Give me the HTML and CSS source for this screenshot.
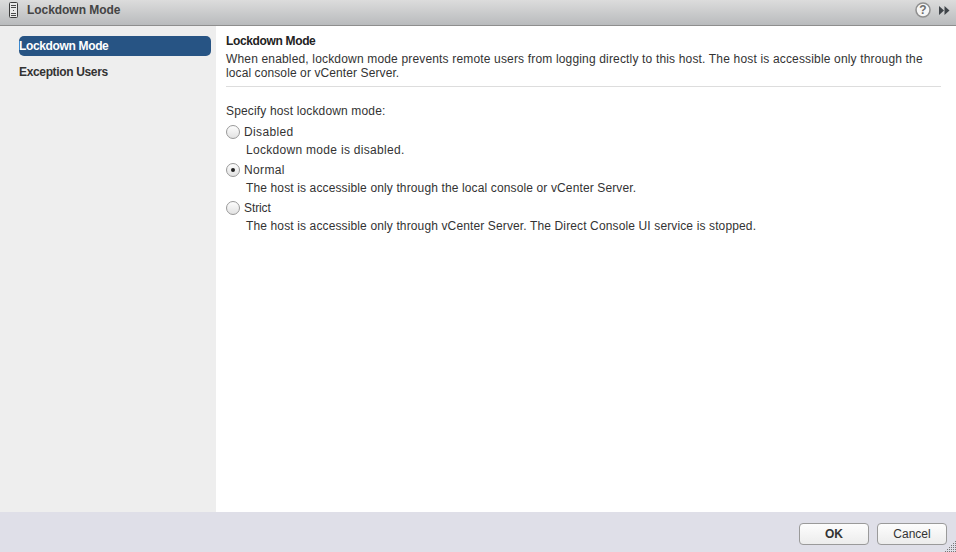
FILE: index.html
```html
<!DOCTYPE html>
<html lang="en">
<head>
<meta charset="utf-8">
<title>Lockdown Mode</title>
<link rel="stylesheet" href="styles.css">
</head>
<body>
<div class="dialog">
  <header class="titlebar">
    <svg class="host-icon" width="9" height="16" viewBox="0 0 9 16">
      <rect x="0.5" y="0.5" width="8" height="15" rx="1" fill="#e9e9e9" stroke="#3c3c3c"/>
      <path d="M2 3.5h5M2 5.5h5M2 11.5h5M2 13.5h5" stroke="#4a4a4a"/>
      <rect x="4" y="8" width="1" height="1" fill="#555"/>
    </svg>
    <span class="title">Lockdown Mode</span>
    <span class="spacer"></span>
    <svg class="help" width="16" height="16" viewBox="0 0 16 16">
      <circle cx="8" cy="8" r="7" fill="#f6f6f6" stroke="#8f8f8f" stroke-width="1.5"/>
      <text x="8" y="12" text-anchor="middle" class="help-mark">?</text>
    </svg>
    <svg class="expand" width="11" height="9" viewBox="0 0 11 9">
      <path d="M0 0L5 4.5L0 9ZM5.5 0L10.5 4.5L5.5 9Z" fill="#3f4449"/>
    </svg>
  </header>
  <div class="main">
    <nav class="sidebar">
      <a class="nav-item active">Lockdown Mode</a>
      <a class="nav-item">Exception Users</a>
    </nav>
    <section class="content">
      <div class="intro">
        <h2 class="heading">Lockdown Mode</h2>
        <p class="desc">When enabled, lockdown mode prevents remote users from logging directly to this host. The host is accessible only through the <span class="desc-end">local console or vCenter Server.</span></p>
      </div>
      <p class="prompt">Specify host lockdown mode:</p>
      <div class="option">
        <div class="radio-line"><span class="radio"></span><span>Disabled</span></div>
        <div class="hint hint-wide">Lockdown mode is disabled.</div>
      </div>
      <div class="option">
        <div class="radio-line"><span class="radio checked"></span><span>Normal</span></div>
        <div class="hint">The host is accessible only through the local console or vCenter Server.</div>
      </div>
      <div class="option">
        <div class="radio-line"><span class="radio"></span><span class="label-tight">Strict</span></div>
        <div class="hint">The host is accessible only through vCenter Server. The Direct Console UI service is stopped.</div>
      </div>
    </section>
  </div>
  <footer class="footer">
    <button class="btn ok">OK</button>
    <button class="btn">Cancel</button>
    <svg class="grip" width="11" height="11" viewBox="0 0 11 11">
      <path d="M10 0h1v1h-1zM8 2h1v1H8zM10 2h1v1h-1zM6 4h1v1H6zM8 4h1v1H8zM10 4h1v1h-1zM4 6h1v1H4zM6 6h1v1H6zM8 6h1v1H8zM10 6h1v1h-1zM2 8h1v1H2zM4 8h1v1H4zM6 8h1v1H6zM8 8h1v1H8zM10 8h1v1h-1zM0 10h1v1H0zM2 10h1v1H2zM4 10h1v1H4zM6 10h1v1H6zM8 10h1v1H8zM10 10h1v1h-1z" fill="#777"/>
    </svg>
  </footer>
</div>
</body>
</html>
```
FILE: styles.css
```css
* { box-sizing: border-box; }
html, body { margin: 0; height: 100%; }
body { font-family: "Liberation Sans", Arial, sans-serif; font-size: 12px; color: #333; overflow: hidden; }
.dialog { width: 956px; height: 552px; display: flex; flex-direction: column; background: #fff; }
.titlebar { height: 26px; flex: none; display: flex; align-items: center; padding: 0 6px 5px 9px; background: linear-gradient(#dcdcdc, #b9bbbd); border-bottom: 1px solid #8e8e8e; }
.host-icon { margin-right: 9px; }
.title { font-size: 12px; font-weight: 700; color: #444; letter-spacing: -0.05px; }
.spacer { flex: 1; }
.help { margin-right: 8px; }
.expand { margin-top: 1px; }
.help-mark { font: 700 12px "Liberation Sans", sans-serif; fill: #6e6e6e; }
.main { flex: 1; display: flex; min-height: 0; }
.sidebar { width: 216px; flex: none; background: #eee; padding: 10px 5px 0 19px; }
.nav-item { display: block; height: 20px; line-height: 20px; margin-bottom: 6px; font-weight: 700; color: #333; border-radius: 5px; letter-spacing: -0.35px; }
.nav-item.active { background: #275484; color: #fff; }
.content { flex: 1; padding: 8px 15px 0 10px; }
.intro { height: 53px; border-bottom: 1px solid #ddd; }
.heading { margin: 0; font-size: 12px; font-weight: 700; line-height: 14px; color: #222; letter-spacing: -0.35px; }
.desc { margin: 4px 0 0; line-height: 14px; letter-spacing: 0.165px; }
.desc-end { letter-spacing: 0.1px; }
.prompt { margin: 17px 0 0; line-height: 14px; height: 19px; letter-spacing: 0.15px; }
.option { height: 38px; }
.radio-line { display: flex; align-items: center; gap: 4px; height: 18px; letter-spacing: 0.35px; }
.label-tight { letter-spacing: -0.1px; }
.radio { width: 14px; height: 14px; border-radius: 50%; border: 1px solid #999; background: linear-gradient(#fdfdfd, #e2e2e2); display: flex; align-items: center; justify-content: center; }
.radio.checked::after { content: ""; width: 4px; height: 4px; border-radius: 50%; background: #222; }
.hint { margin-left: 20px; line-height: 18px; letter-spacing: 0.13px; }
.hint-wide { letter-spacing: 0.3px; }
.footer { position: relative; height: 40px; flex: none; background: #dfdfe8; display: flex; justify-content: flex-end; align-items: center; gap: 8px; padding: 4px 9px 0 0; }
.btn { width: 70px; height: 22px; padding: 0; font: 12px "Liberation Sans", sans-serif; color: #333; border: 1px solid #9a9a9a; border-radius: 4px; background: linear-gradient(#fdfdfd, #ececec); }
.btn.ok { font-weight: 700; }
.grip { position: absolute; right: 0; bottom: 0; }
```
